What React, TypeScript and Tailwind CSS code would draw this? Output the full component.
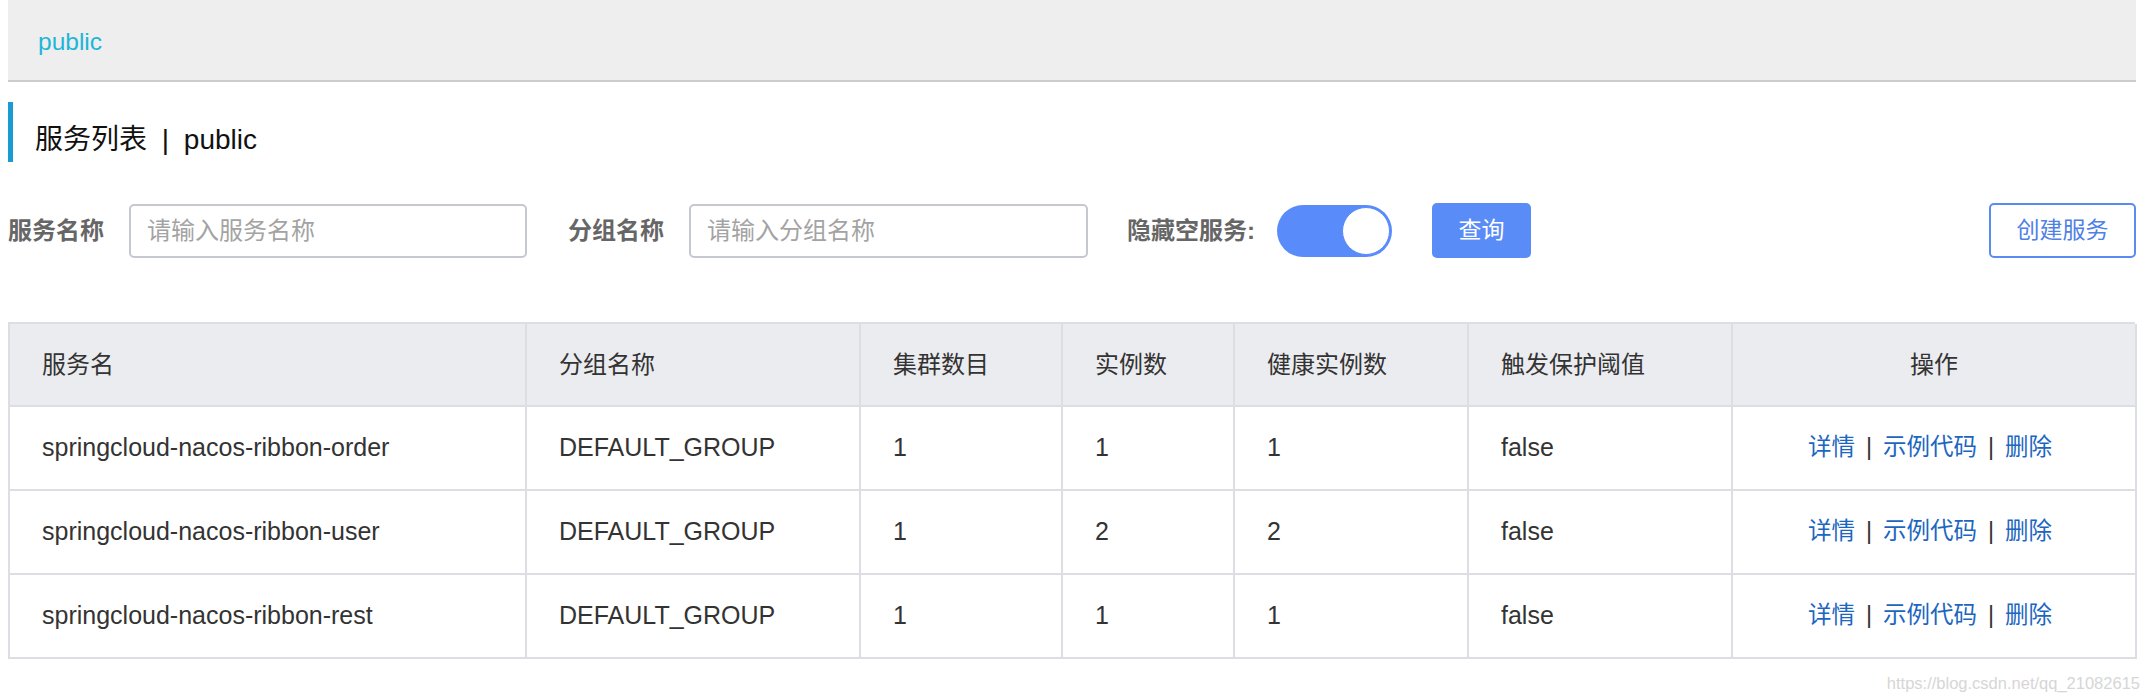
const rows = [
  { name: "springcloud-nacos-ribbon-order", group: "DEFAULT_GROUP", clusters: 1, instances: 1, healthy: 1, threshold: "false" },
  { name: "springcloud-nacos-ribbon-user", group: "DEFAULT_GROUP", clusters: 1, instances: 2, healthy: 2, threshold: "false" },
  { name: "springcloud-nacos-ribbon-rest", group: "DEFAULT_GROUP", clusters: 1, instances: 1, healthy: 1, threshold: "false" },
];

const headers = ["服务名", "分组名称", "集群数目", "实例数", "健康实例数", "触发保护阈值"];

const gridCols = "grid grid-cols-[517px_334px_202px_172px_234px_264px_404px]";

export default function App() {
  return (
    <div
      className="w-[2150px] h-[698px] bg-white pl-2 pr-[14px] text-[#333]"
      style={{ fontFamily: '"Liberation Sans", "Noto Sans CJK SC", sans-serif' }}
    >
      {/* Namespace bar */}
      <div className="h-[82px] bg-[#eeeeee] border-b-2 border-[#cccccc] flex items-center pl-[30px] pt-1">
        <span className="text-[24.5px] text-[#20b6d8]">public</span>
      </div>

      {/* Title */}
      <div className="mt-[20px] h-[60px] flex items-center">
        <div className="w-[5px] h-full bg-[#1a9bd3]" />
        <h1 className="ml-[22px] mt-[16px] text-[28px] text-[#111] font-normal">
          服务列表 <span className="mx-[7px]">|</span> public
        </h1>
      </div>

      {/* Filters */}
      <div className="mt-[41px] h-[55px] flex items-center">
        <span className="text-[24px] font-bold text-[#666]">服务名称</span>
        <input
          className="ml-[25px] w-[398px] h-[54px] border-2 border-[#c6c8cf] rounded-[5px] px-[16px] text-[24px] placeholder:text-[#a3a3a3] outline-none"
          placeholder="请输入服务名称"
        />
        <span className="ml-[41px] text-[24px] font-bold text-[#666]">分组名称</span>
        <input
          className="ml-[25px] w-[399px] h-[54px] border-2 border-[#c6c8cf] rounded-[5px] px-[16px] text-[24px] placeholder:text-[#a3a3a3] outline-none"
          placeholder="请输入分组名称"
        />
        <span className="ml-[39px] text-[24px] font-bold text-[#666]">隐藏空服务:</span>
        <div className="ml-[22px] w-[115px] h-[52px] rounded-full bg-[#598bfb] flex items-center justify-end pr-[2px]">
          <div className="w-[48px] h-[48px] rounded-full bg-white border border-[#598bfb]" />
        </div>
        <button className="ml-[40px] w-[99px] h-[55px] rounded-[5px] bg-[#5a8cf8] text-white text-[23px]">
          查询
        </button>
        <button className="ml-auto w-[147px] h-[55px] rounded-[5px] border-2 border-[#5a8cf0] text-[#4f80e6] text-[23px] bg-white">
          创建服务
        </button>
      </div>

      {/* Table */}
      <div className="mt-[64px] w-[2127px] border-l-2 border-t-2 border-[#dcdee3] text-[25px]">
        <div className={`${gridCols} h-[83px] bg-[#ebecf0] text-[24px]`}>
          {headers.map((h) => (
            <div key={h} className="flex items-center pl-[32px] border-r-2 border-b-2 border-[#dcdee3] text-[#333]">
              {h}
            </div>
          ))}
          <div className="flex items-center justify-center border-r-2 border-b-2 border-[#dcdee3] text-[#333]">
            操作
          </div>
        </div>
        {rows.map((r) => (
          <div key={r.name} className={`${gridCols} h-[84px]`}>
            <div className="flex items-center pl-[32px] border-r-2 border-b-2 border-[#dcdee3]">{r.name}</div>
            <div className="flex items-center pl-[32px] border-r-2 border-b-2 border-[#dcdee3]">{r.group}</div>
            <div className="flex items-center pl-[32px] border-r-2 border-b-2 border-[#dcdee3]">{r.clusters}</div>
            <div className="flex items-center pl-[32px] border-r-2 border-b-2 border-[#dcdee3]">{r.instances}</div>
            <div className="flex items-center pl-[32px] border-r-2 border-b-2 border-[#dcdee3]">{r.healthy}</div>
            <div className="flex items-center pl-[32px] border-r-2 border-b-2 border-[#dcdee3]">{r.threshold}</div>
            <div className="flex items-center justify-center pr-[8px] border-r-2 border-b-2 border-[#dcdee3] text-[23.5px]">
              <a className="text-[#1c66c0]">详情</a>
              <span className="mx-[11px] text-[#333]">|</span>
              <a className="text-[#1c66c0]">示例代码</a>
              <span className="mx-[11px] text-[#333]">|</span>
              <a className="text-[#1c66c0]">删除</a>
            </div>
          </div>
        ))}
      </div>

      {/* Watermark */}
      <div className="mt-[12px] -mr-[4px] text-right text-[16.5px] text-[#d6d6d6]">
        https://blog.csdn.net/qq_21082615
      </div>
    </div>
  );
}
